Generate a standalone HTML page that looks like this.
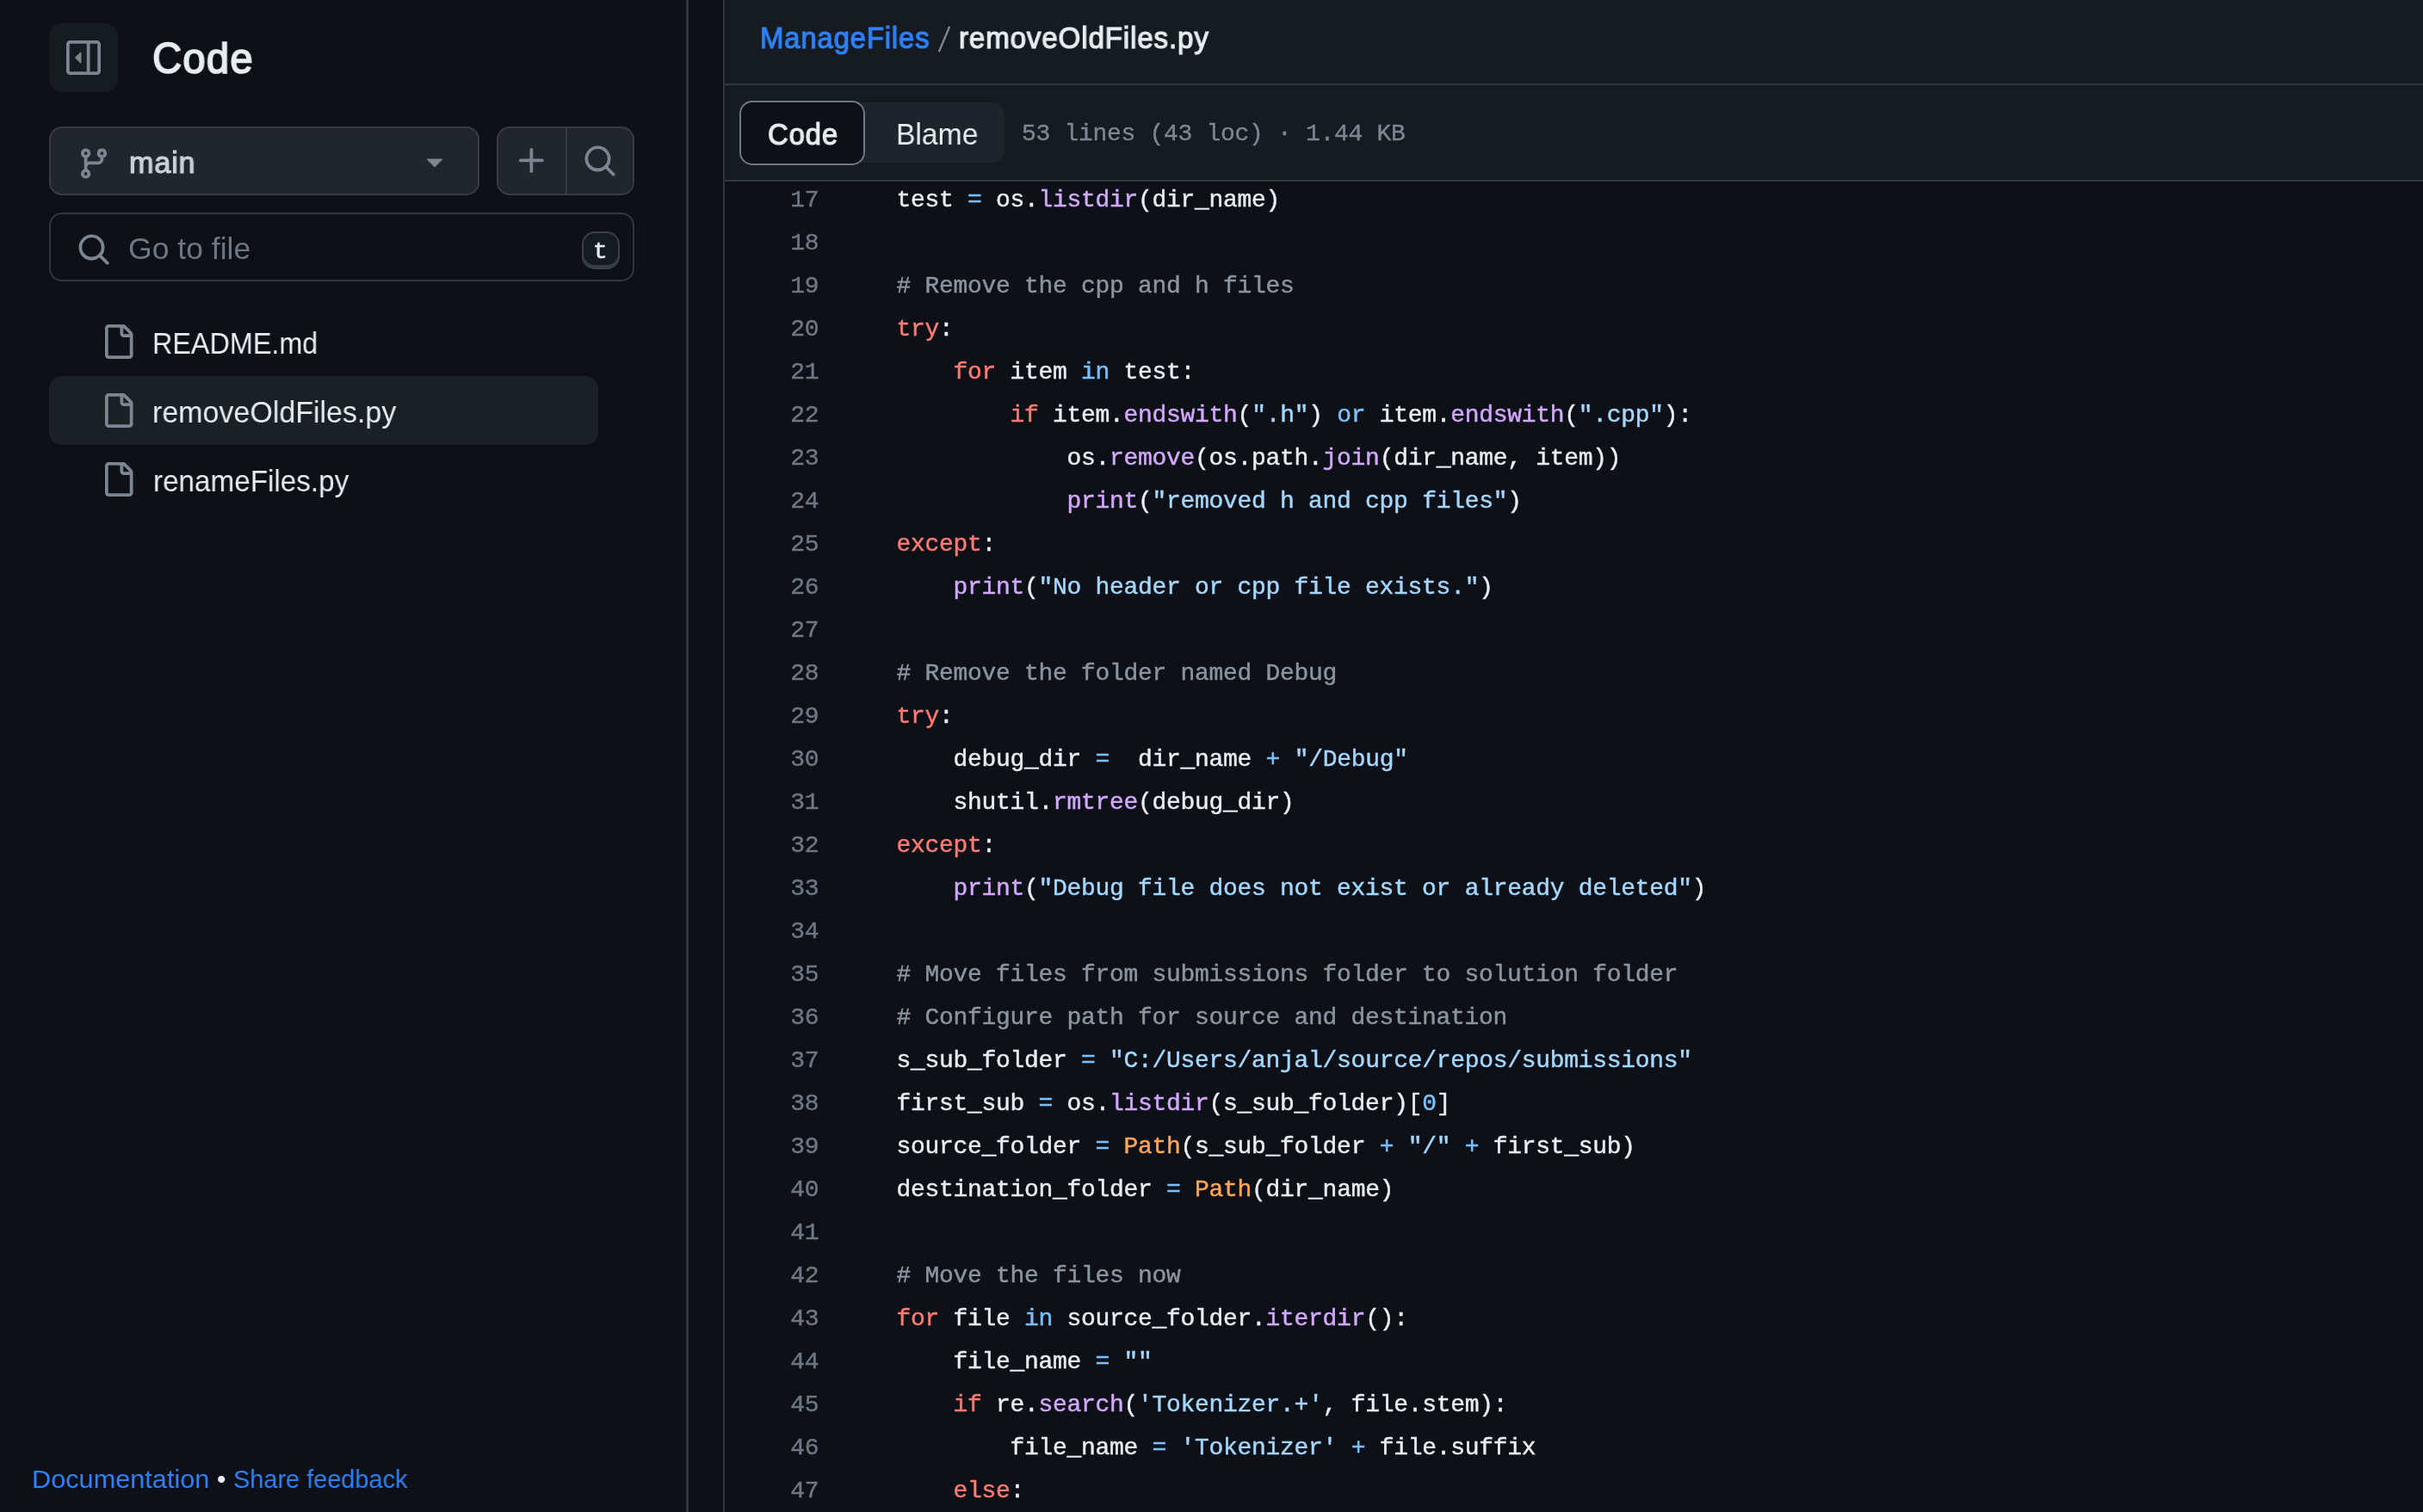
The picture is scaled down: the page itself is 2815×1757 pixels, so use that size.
<!DOCTYPE html>
<html lang="en">
<head>
<meta charset="utf-8">
<title>ManageFiles/removeOldFiles.py</title>
<style>
*{box-sizing:border-box;margin:0;padding:0}
html,body{width:2815px;height:1757px;overflow:hidden;background:#0d1117}
body{position:relative;font-family:"Liberation Sans",sans-serif;color:#e6edf3}
.abs{position:absolute}
svg{display:block;position:absolute;fill:#7d8590}
.t{position:absolute;white-space:nowrap;line-height:1;transform-origin:0 50%;will-change:transform}
/* sidebar */
#sbborder{left:797px;top:0;width:3px;height:1757px;background:#30363d}
#collapse{left:57px;top:27px;width:80px;height:80px;border-radius:15px;background:#161b22}
#branch{left:57px;top:147px;width:500px;height:80px;border-radius:15px;background:#21262d;border:2px solid #363b42}
#grp{left:577px;top:147px;width:160px;height:80px;border-radius:15px;background:#21262d;border:2px solid #363b42}
#grpdiv{left:657px;top:149px;width:2px;height:76px;background:#363b42}
#search{left:57px;top:247px;width:680px;height:80px;border-radius:15px;background:#0d1117;border:2px solid #30363d}
#kbd{left:676px;top:269px;width:44px;height:44px;border-radius:15px;background:#161b22;border:2px solid #393f48;box-shadow:inset 0 -3px 0 #393f48}
#sel{left:57px;top:437px;width:638px;height:80px;border-radius:15px;background:#1b2025}
/* panel */
#panel{left:840px;top:0;width:1975px;height:1757px;border-left:2px solid #30363d}
#hdr{left:842px;top:0;width:1973px;height:97px;background:#161b22}
#hdrb{left:842px;top:97px;width:1973px;height:2px;background:#30363d}
#tool{left:842px;top:99px;width:1973px;height:110px;background:#161b22}
#toolb{left:842px;top:209px;width:1973px;height:2px;background:#30363d}
#track{left:859px;top:119px;width:308px;height:70px;border-radius:15px;background:#1f242c}
#codebtn{left:859px;top:117px;width:146px;height:75px;border-radius:15px;background:#0d1117;border:2px solid #6e7681}
/* code */
#code{left:842px;top:208px;width:1973px;font-family:"Liberation Mono",monospace;font-size:28px;letter-spacing:-0.3px;line-height:50px;z-index:0;-webkit-text-stroke:0.45px;will-change:transform}
#code .l{height:50px;position:relative}
#code .n{position:absolute;left:0;width:109.3px;text-align:right;color:#6e7681}
#code .c{position:absolute;left:199.5px;color:#e6edf3;white-space:pre}
.k{color:#ff7b72}.o{color:#79c0ff}.f{color:#d2a8ff}.s{color:#a5d6ff}.m{color:#8b949e}.v{color:#ffa657}
.top{z-index:2}
</style>
</head>
<body>
<!-- SIDEBAR -->
<div class="abs" id="sbborder"></div>
<div class="abs" id="collapse"></div>
<svg style="left:77px;top:47px" width="40" height="40" viewBox="0 0 16 16"><path d="m4.177 7.823 2.396-2.396A.25.25 0 0 1 7 5.604v4.792a.25.25 0 0 1-.427.177L4.177 8.177a.25.25 0 0 1 0-.354Z"/><path d="M0 1.75C0 .784.784 0 1.75 0h12.5C15.216 0 16 .784 16 1.75v12.5A1.75 1.75 0 0 1 14.25 16H1.75A1.75 1.75 0 0 1 0 14.25Zm1.75-.25a.25.25 0 0 0-.25.25v12.5c0 .138.112.25.25.25H9.5v-13Zm12.5 13a.25.25 0 0 0 .25-.25V1.75a.25.25 0 0 0-.25-.25H11v13Z"/></svg>
<div class="t" id="tCode" style="left:177px;top:42.5px;letter-spacing:1.2px;font-size:50px;-webkit-text-stroke:1.7px #e6edf3;transform:scaleX(0.9480)">Code</div>

<div class="abs" id="branch"></div>
<svg style="left:89px;top:169.5px" width="40" height="40" viewBox="0 0 16 16"><path d="M9.5 3.25a2.25 2.25 0 1 1 3 2.122V6A2.5 2.5 0 0 1 10 8.5H6a1 1 0 0 0-1 1v1.128a2.251 2.251 0 1 1-1.5 0V5.372a2.25 2.25 0 1 1 1.5 0v1.836A2.493 2.493 0 0 1 6 7h4a1 1 0 0 0 1-1v-.628A2.25 2.25 0 0 1 9.5 3.25Zm-6 0a.75.75 0 1 0 1.5 0 .75.75 0 0 0-1.5 0Zm8.25-.75a.75.75 0 1 0 0 1.5.75.75 0 0 0 0-1.5ZM4.25 12a.75.75 0 1 0 0 1.5.75.75 0 0 0 0-1.5Z"/></svg>
<div class="t" id="tMain" style="left:149.7px;top:171px;letter-spacing:0.8px;font-size:35px;color:#c9d1d9;-webkit-text-stroke:1.2px #c9d1d9;transform:scaleX(0.9783)">main</div>
<svg style="left:485px;top:167px" width="40" height="40" viewBox="0 0 16 16"><path d="m4.427 7.427 3.396 3.396a.25.25 0 0 0 .354 0l3.396-3.396A.25.25 0 0 0 11.396 7H4.604a.25.25 0 0 0-.177.427Z"/></svg>

<div class="abs" id="grp"></div>
<div class="abs" id="grpdiv"></div>
<svg style="left:597.5px;top:167px" width="40" height="40" viewBox="0 0 16 16"><path d="M7.75 2a.75.75 0 0 1 .75.75V7h4.25a.75.75 0 0 1 0 1.5H8.5v4.25a.75.75 0 0 1-1.5 0V8.5H2.75a.75.75 0 0 1 0-1.5H7V2.75A.75.75 0 0 1 7.75 2Z"/></svg>
<svg style="left:677px;top:167px" width="40" height="40" viewBox="0 0 16 16"><path d="M10.68 11.74a6 6 0 0 1-7.922-8.982 6 6 0 0 1 8.982 7.922l3.04 3.04a.749.749 0 0 1-.326 1.275.749.749 0 0 1-.734-.215ZM11.5 7a4.499 4.499 0 1 0-8.997 0A4.499 4.499 0 0 0 11.5 7Z"/></svg>

<div class="abs" id="search"></div>
<svg style="left:88.7px;top:269.5px" width="40" height="40" viewBox="0 0 16 16"><path d="M10.68 11.74a6 6 0 0 1-7.922-8.982 6 6 0 0 1 8.982 7.922l3.04 3.04a.749.749 0 0 1-.326 1.275.749.749 0 0 1-.734-.215ZM11.5 7a4.499 4.499 0 1 0-8.997 0A4.499 4.499 0 0 0 11.5 7Z"/></svg>
<div class="t" id="tGo" style="left:149px;top:271px;font-size:35px;color:#6e7681;transform:scaleX(1.015)">Go to file</div>
<div class="abs" id="kbd"></div>
<div class="t" id="tKbd" style="left:689px;top:278.5px;font-size:28px;-webkit-text-stroke:0.5px;font-family:'Liberation Mono',monospace">t</div>

<svg style="left:117px;top:377px" width="40" height="40" viewBox="0 0 16 16"><path d="M2 1.75C2 .784 2.784 0 3.75 0h6.586c.464 0 .909.184 1.237.513l2.914 2.914c.329.328.513.773.513 1.237v9.586A1.75 1.75 0 0 1 13.25 16h-9.5A1.75 1.75 0 0 1 2 14.25Zm1.75-.25a.25.25 0 0 0-.25.25v12.5c0 .138.112.25.25.25h9.5a.25.25 0 0 0 .25-.25V6h-2.75A1.75 1.75 0 0 1 9 4.25V1.5Zm6.75.062V4.25c0 .138.112.25.25.25h2.688l-.011-.013-2.914-2.914-.013-.011Z"/></svg>
<div class="t" id="tF1" style="left:177px;top:381px;font-size:35px;transform:scaleX(0.924)">README.md</div>
<div class="abs" id="sel"></div>
<svg style="left:117px;top:457px" width="40" height="40" viewBox="0 0 16 16"><path d="M2 1.75C2 .784 2.784 0 3.75 0h6.586c.464 0 .909.184 1.237.513l2.914 2.914c.329.328.513.773.513 1.237v9.586A1.75 1.75 0 0 1 13.25 16h-9.5A1.75 1.75 0 0 1 2 14.25Zm1.75-.25a.25.25 0 0 0-.25.25v12.5c0 .138.112.25.25.25h9.5a.25.25 0 0 0 .25-.25V6h-2.75A1.75 1.75 0 0 1 9 4.25V1.5Zm6.75.062V4.25c0 .138.112.25.25.25h2.688l-.011-.013-2.914-2.914-.013-.011Z"/></svg>
<div class="t" id="tF2" style="left:176.5px;top:461px;font-size:35px;transform:scaleX(0.971)">removeOldFiles.py</div>
<svg style="left:117px;top:537px" width="40" height="40" viewBox="0 0 16 16"><path d="M2 1.75C2 .784 2.784 0 3.75 0h6.586c.464 0 .909.184 1.237.513l2.914 2.914c.329.328.513.773.513 1.237v9.586A1.75 1.75 0 0 1 13.25 16h-9.5A1.75 1.75 0 0 1 2 14.25Zm1.75-.25a.25.25 0 0 0-.25.25v12.5c0 .138.112.25.25.25h9.5a.25.25 0 0 0 .25-.25V6h-2.75A1.75 1.75 0 0 1 9 4.25V1.5Zm6.75.062V4.25c0 .138.112.25.25.25h2.688l-.011-.013-2.914-2.914-.013-.011Z"/></svg>
<div class="t" id="tF3" style="left:177.5px;top:541px;font-size:35px;transform:scaleX(0.950)">renameFiles.py</div>

<div class="t" id="tDoc" style="left:36.5px;top:1704px;font-size:30px;color:#2f81f7;transform:scaleX(1.023)">Documentation</div>
<div class="t" id="tDot" style="left:251.5px;top:1704px;font-size:30px">•</div>
<div class="t" id="tShare" style="left:271px;top:1704px;font-size:30px;color:#2f81f7;transform:scaleX(0.963)">Share feedback</div>

<!-- PANEL -->
<div class="abs" id="panel"></div>
<!--CODESTART-->
<div class="abs" id="code">
<div class="l"><span class="n">17</span><span class="c">test <span class="o">=</span> os.<span class="f">listdir</span>(dir_name)</span></div>
<div class="l"><span class="n">18</span><span class="c"></span></div>
<div class="l"><span class="n">19</span><span class="c"><span class="m"># Remove the cpp and h files</span></span></div>
<div class="l"><span class="n">20</span><span class="c"><span class="k">try</span>:</span></div>
<div class="l"><span class="n">21</span><span class="c">    <span class="k">for</span> item <span class="o">in</span> test:</span></div>
<div class="l"><span class="n">22</span><span class="c">        <span class="k">if</span> item.<span class="f">endswith</span>(<span class="s">".h"</span>) <span class="o">or</span> item.<span class="f">endswith</span>(<span class="s">".cpp"</span>):</span></div>
<div class="l"><span class="n">23</span><span class="c">            os.<span class="f">remove</span>(os.path.<span class="f">join</span>(dir_name, item))</span></div>
<div class="l"><span class="n">24</span><span class="c">            <span class="f">print</span>(<span class="s">"removed h and cpp files"</span>)</span></div>
<div class="l"><span class="n">25</span><span class="c"><span class="k">except</span>:</span></div>
<div class="l"><span class="n">26</span><span class="c">    <span class="f">print</span>(<span class="s">"No header or cpp file exists."</span>)</span></div>
<div class="l"><span class="n">27</span><span class="c"></span></div>
<div class="l"><span class="n">28</span><span class="c"><span class="m"># Remove the folder named Debug</span></span></div>
<div class="l"><span class="n">29</span><span class="c"><span class="k">try</span>:</span></div>
<div class="l"><span class="n">30</span><span class="c">    debug_dir <span class="o">=</span>  dir_name <span class="o">+</span> <span class="s">"/Debug"</span></span></div>
<div class="l"><span class="n">31</span><span class="c">    shutil.<span class="f">rmtree</span>(debug_dir)</span></div>
<div class="l"><span class="n">32</span><span class="c"><span class="k">except</span>:</span></div>
<div class="l"><span class="n">33</span><span class="c">    <span class="f">print</span>(<span class="s">"Debug file does not exist or already deleted"</span>)</span></div>
<div class="l"><span class="n">34</span><span class="c"></span></div>
<div class="l"><span class="n">35</span><span class="c"><span class="m"># Move files from submissions folder to solution folder</span></span></div>
<div class="l"><span class="n">36</span><span class="c"><span class="m"># Configure path for source and destination</span></span></div>
<div class="l"><span class="n">37</span><span class="c">s_sub_folder <span class="o">=</span> <span class="s">"C:/Users/anjal/source/repos/submissions"</span></span></div>
<div class="l"><span class="n">38</span><span class="c">first_sub <span class="o">=</span> os.<span class="f">listdir</span>(s_sub_folder)[<span class="o">0</span>]</span></div>
<div class="l"><span class="n">39</span><span class="c">source_folder <span class="o">=</span> <span class="v">Path</span>(s_sub_folder <span class="o">+</span> <span class="s">"/"</span> <span class="o">+</span> first_sub)</span></div>
<div class="l"><span class="n">40</span><span class="c">destination_folder <span class="o">=</span> <span class="v">Path</span>(dir_name)</span></div>
<div class="l"><span class="n">41</span><span class="c"></span></div>
<div class="l"><span class="n">42</span><span class="c"><span class="m"># Move the files now</span></span></div>
<div class="l"><span class="n">43</span><span class="c"><span class="k">for</span> file <span class="o">in</span> source_folder.<span class="f">iterdir</span>():</span></div>
<div class="l"><span class="n">44</span><span class="c">    file_name <span class="o">=</span> <span class="s">""</span></span></div>
<div class="l"><span class="n">45</span><span class="c">    <span class="k">if</span> re.<span class="f">search</span>(<span class="s">'Tokenizer.+'</span>, file.stem):</span></div>
<div class="l"><span class="n">46</span><span class="c">        file_name <span class="o">=</span> <span class="s">'Tokenizer'</span> <span class="o">+</span> file.suffix</span></div>
<div class="l"><span class="n">47</span><span class="c">    <span class="k">else</span>:</span></div>
<div class="l"><span class="n">48</span><span class="c">        file_name <span class="o">=</span> <span class="s">'Parser'</span> <span class="o">+</span> file.suffix</span></div>
</div>
<!--CODEEND-->
<div class="abs top" id="hdr"></div>
<div class="abs top" id="hdrb"></div>
<div class="abs top" id="tool"></div>
<div class="abs top" id="toolb"></div>
<div class="t top" id="tMF" style="left:882.5px;top:26px;letter-spacing:0.9px;font-size:35px;color:#2f81f7;-webkit-text-stroke:1.2px #2f81f7;transform:scaleX(0.9385)">ManageFiles</div>
<svg class="top" style="left:1085px;top:25px;fill:none" width="24" height="40" viewBox="0 0 24 40"><line x1="18.2" y1="5.8" x2="5.8" y2="35.2" stroke="#7d8590" stroke-width="2.4"/></svg>
<div class="t top" id="tFN" style="left:1114px;top:26px;letter-spacing:0.9px;font-size:35px;-webkit-text-stroke:1.2px #e6edf3;transform:scaleX(0.9468)">removeOldFiles.py</div>
<div class="abs top" id="track"></div>
<div class="abs top" id="codebtn"></div>
<div class="t top" id="tCb" style="left:891.5px;top:138px;letter-spacing:0.9px;font-size:35px;-webkit-text-stroke:1.2px #e6edf3;transform:scaleX(0.9388)">Code</div>
<div class="t top" id="tBl" style="left:1041px;top:138px;font-size:35px;transform:scaleX(0.9625)">Blame</div>
<div class="t top" id="tInfo" style="left:1187.2px;top:142px;font-size:28px;letter-spacing:-0.3px;-webkit-text-stroke:0.4px;font-family:'Liberation Mono',monospace;color:#7d8590">53 lines (43 loc) · 1.44 KB</div>
</body>
</html>
